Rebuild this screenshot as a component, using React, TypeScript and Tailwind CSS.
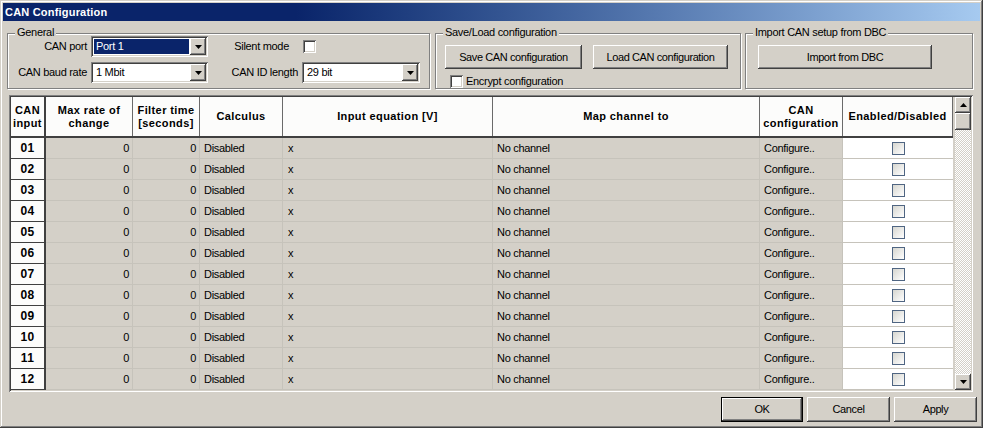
import React from 'react';

const RAISED =
  'shadow-[inset_-1px_-1px_#404040,inset_1px_1px_#ffffff,inset_-2px_-2px_#808080,inset_2px_2px_#d4d0c8]';
const SUNKEN =
  'shadow-[inset_1px_1px_#808080,inset_-1px_-1px_#ffffff,inset_2px_2px_#404040,inset_-2px_-2px_#d4d0c8]';
const COLS = 'grid grid-cols-[35px_87px_67px_83px_210px_267px_83px_110px]';

function Button({ label, className = '' }: { label: string; className?: string }) {
  return (
    <button className={`flex items-center justify-center bg-[#d4d0c8] text-[11px] tracking-[-0.4px] text-black ${RAISED} ${className}`}>
      {label}
    </button>
  );
}

function Arrow({ up = false }: { up?: boolean }) {
  return (
    <svg width="7" height="4" viewBox="0 0 7 4">
      <path d={up ? 'M3.5 0L7 4H0z' : 'M0 0h7L3.5 4z'} fill="#000" />
    </svg>
  );
}

function Combo({ value, selected = false, className = '' }: { value: string; selected?: boolean; className?: string }) {
  return (
    <div className={`flex h-[21px] items-stretch bg-white p-[2px] ${SUNKEN} ${className}`}>
      <div className="flex flex-1 items-stretch p-[1px]">
        <span className={selected ? 'flex w-full items-center bg-[#0a246a] pl-[2px] text-white' : 'flex items-center pl-[2px]'}>
          {value}
        </span>
      </div>
      <div className={`flex w-[16px] items-center justify-center bg-[#d4d0c8] ${RAISED}`}>
        <Arrow />
      </div>
    </div>
  );
}

function ClassicCheck() {
  return <div className={`h-[13px] w-[13px] bg-white ${SUNKEN}`} />;
}

function GridCheck() {
  return (
    <div className="h-[13px] w-[13px] border border-[#4f6582] bg-gradient-to-br from-[#d6d6d0] to-white" />
  );
}

function Group({ title, className = '', children }: { title: string; className?: string; children: React.ReactNode }) {
  return (
    <div className={`relative border border-[#808080] shadow-[1px_1px_0_#ffffff,inset_1px_1px_0_#ffffff] ${className}`}>
      <span className="absolute -top-[8px] left-[7px] bg-[#d4d0c8] px-[2px] leading-[13px]">{title}</span>
      {children}
    </div>
  );
}

const HEADERS: string[][] = [
  ['CAN', 'input'],
  ['Max rate of', 'change'],
  ['Filter time', '[seconds]'],
  ['Calculus'],
  ['Input equation [V]'],
  ['Map channel to'],
  ['CAN', 'configuration'],
  ['Enabled/Disabled'],
];

const ROWS = ['01', '02', '03', '04', '05', '06', '07', '08', '09', '10', '11', '12'];

export default function App() {
  return (
    <div
      className={`flex h-[428px] w-[983px] flex-col bg-[#d4d0c8] p-[3px] font-['Liberation_Sans',Arial,sans-serif] text-[11px] tracking-[-0.3px] text-black shadow-[inset_-1px_-1px_#404040,inset_1px_1px_#d4d0c8,inset_-2px_-2px_#808080,inset_2px_2px_#ffffff]`}
    >
      {/* title bar */}
      <div className="flex h-[18px] items-center bg-gradient-to-r from-[#0a246a] from-30% to-[#a6caf0] pl-[2px] text-[11px] font-bold tracking-[0.2px] text-white">
        CAN Configuration
      </div>

      {/* top groups */}
      <div className="mt-[12px] ml-[4px] flex h-[56px] gap-[5px]">
        <Group title="General" className="w-[423px]">
          <div className="mt-[2px] grid grid-cols-[79px_117px_86px_118px] gap-x-[4px] gap-y-[5px]">
            <div className="flex h-[21px] items-center justify-end">CAN port</div>
            <Combo value="Port 1" selected />
            <div className="flex h-[21px] items-center justify-end pr-[9px]">Silent mode</div>
            <div className="flex h-[21px] items-center pl-[1px]">
              <ClassicCheck />
            </div>
            <div className="flex h-[21px] items-center justify-end">CAN baud rate</div>
            <Combo value="1 Mbit" />
            <div className="flex h-[21px] items-center justify-end">CAN ID length</div>
            <Combo value="29 bit" />
          </div>
        </Group>

        <Group title="Save/Load configuration" className="w-[306px]">
          <div className="mt-[11px] ml-[9px] flex gap-[11px]">
            <Button label="Save CAN configuration" className="h-[24px] w-[137px]" />
            <Button label="Load CAN configuration" className="h-[24px] w-[135px]" />
          </div>
          <div className="mt-[4px] ml-[14px] flex items-center gap-[3px]">
            <ClassicCheck />
            <span>Encrypt configuration</span>
          </div>
        </Group>

        <Group title="Import CAN setup from DBC" className="ml-[-1px] w-[228px]">
          <div className="mt-[11px] ml-[12px]">
            <Button label="Import from DBC" className="h-[24px] w-[174px]" />
          </div>
        </Group>
      </div>

      {/* table */}
      <div className={`mt-[6px] ml-[6px] flex h-[297px] w-[964px] bg-[#d4d0c8] p-[2px] ${SUNKEN}`}>
        <div className="flex w-[942px] flex-col overflow-hidden">
          <div className={`${COLS} h-[41px] border-b-2 border-[#404040]`}>
            {HEADERS.map((lines, i) => (
              <div
                key={i}
                className={`flex flex-col items-center justify-center bg-[#fcfcfb] text-center font-bold leading-[13px] tracking-[0.4px] ${
                  i === 0 ? 'border-r-2 border-[#404040]' : 'border-r border-[#6a6a6a]'
                }`}
              >
                {lines.map((l) => (
                  <span key={l}>{l}</span>
                ))}
              </div>
            ))}
          </div>
          {ROWS.map((r) => (
            <div key={r} className={`${COLS} h-[21px]`}>
              <div className="flex items-center justify-center border-r-2 border-b border-[#404040] bg-[#fcfcfb] text-[12px] font-bold tracking-[0.3px]">
                {r}
              </div>
              <div className="flex items-center justify-end border-r border-b border-[#c6c3bb] pr-[3px]">0</div>
              <div className="flex items-center justify-end border-r border-b border-[#c6c3bb] pr-[3px]">0</div>
              <div className="flex items-center border-r border-b border-[#c6c3bb] pl-[4px]">Disabled</div>
              <div className="flex items-center border-r border-b border-[#c6c3bb] pl-[5px]">x</div>
              <div className="flex items-center border-r border-b border-[#c6c3bb] pl-[4px]">No channel</div>
              <div className="flex items-center border-r border-b border-[#c6c3bb] pl-[4px]">Configure..</div>
              <div className="flex items-center justify-center border-b border-[#c6c3bb] bg-white">
                <GridCheck />
              </div>
            </div>
          ))}
        </div>

        {/* scrollbar */}
        <div className="ml-[2px] flex w-[16px] flex-col bg-[repeating-conic-gradient(#d4d0c8_0%_25%,#ffffff_0%_50%)] bg-[length:2px_2px]">
          <div className={`flex h-[16px] items-center justify-center bg-[#d4d0c8] ${RAISED}`}>
            <Arrow up />
          </div>
          <div className={`h-[17px] bg-[#d4d0c8] ${RAISED}`} />
          <div className="flex-1" />
          <div className={`flex h-[16px] items-center justify-center bg-[#d4d0c8] ${RAISED}`}>
            <Arrow />
          </div>
        </div>
      </div>

      {/* dialog buttons */}
      <div className="mt-[5px] mr-[3px] flex justify-end gap-[4px]">
        <div className="border border-black">
          <Button label="OK" className="h-[23px] w-[80px]" />
        </div>
        <Button label="Cancel" className="h-[25px] w-[83px]" />
        <Button label="Apply" className="h-[25px] w-[83px]" />
      </div>
    </div>
  );
}
